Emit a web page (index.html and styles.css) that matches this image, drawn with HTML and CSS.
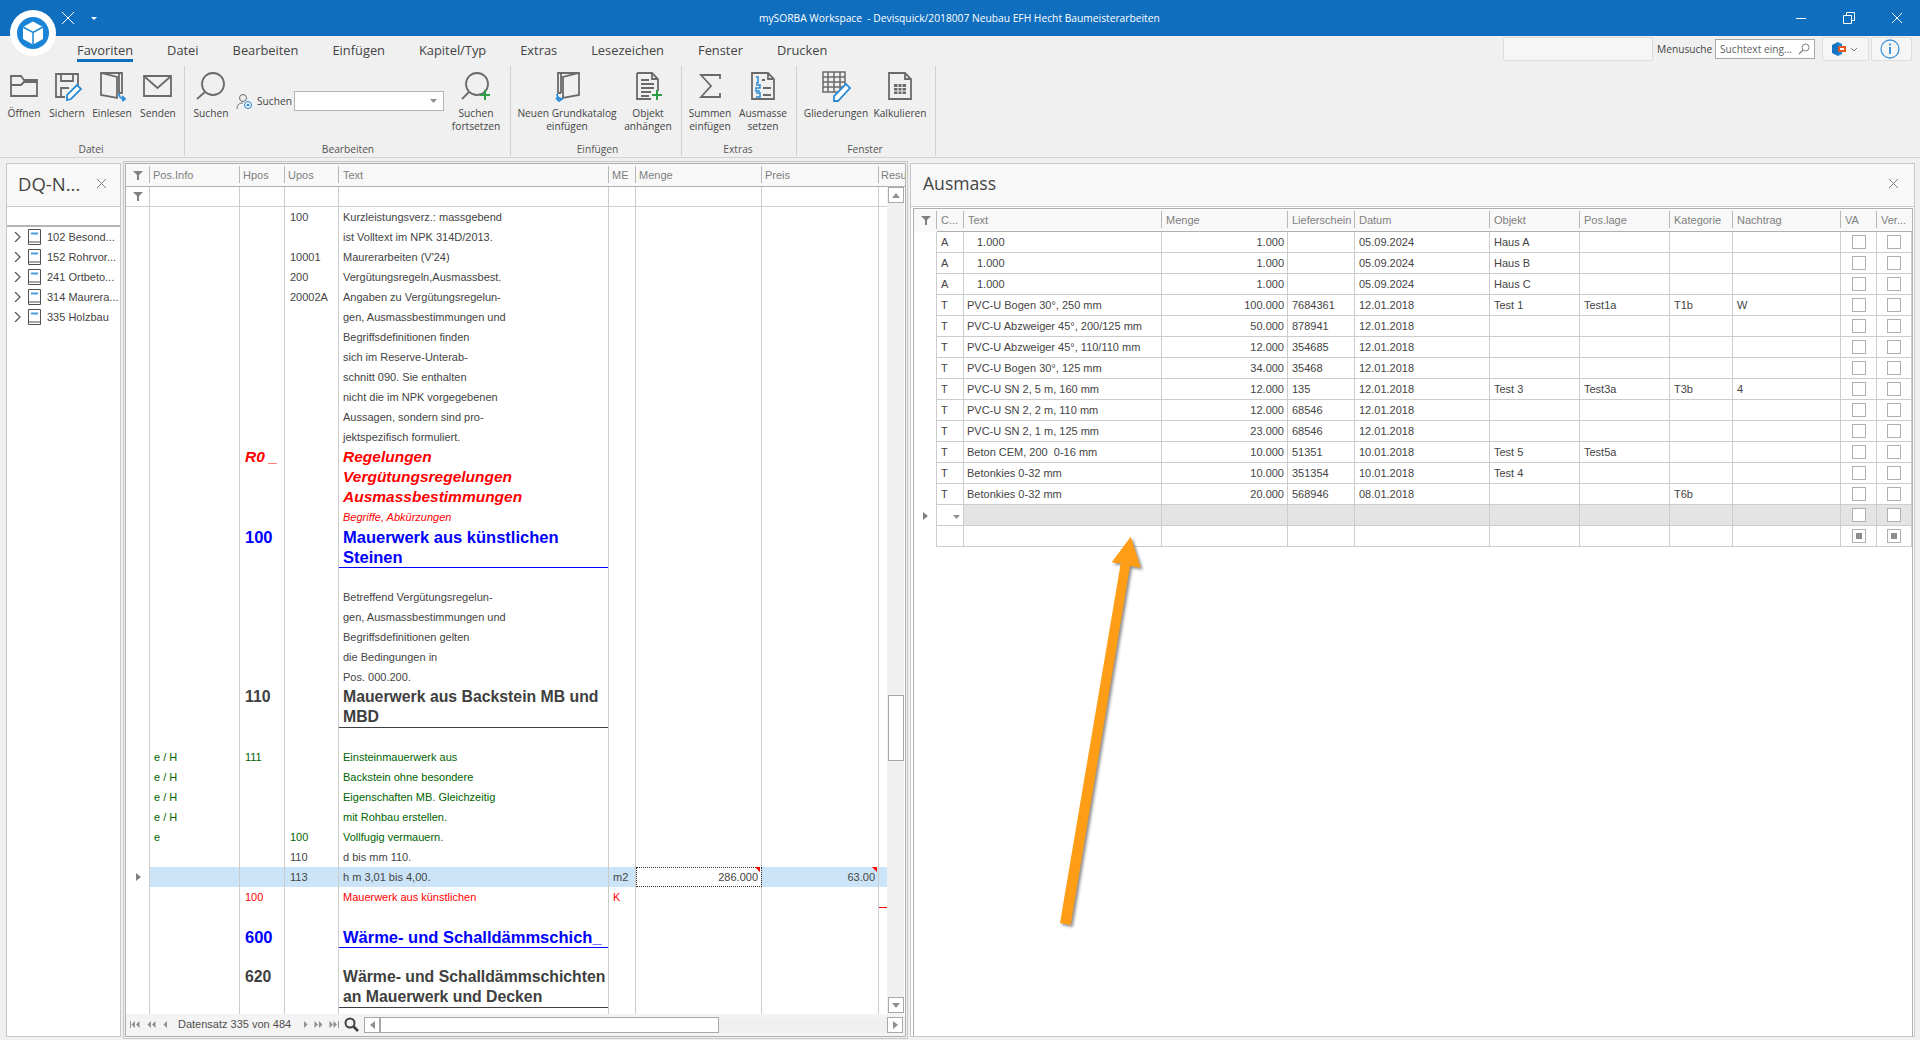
FILE: index.html
```html
<!DOCTYPE html>
<html>
<head>
    <title>mySORBA Workspace</title>
    <link rel="stylesheet" href="styles.css">
</head>
<body>
<div class="window">
    <div class="titlebar">
        <div class="qat">
            <svg class="qat-x" width="14" height="14" viewBox="0 0 14 14"><path d="M1 1l12 12M13 1L1 13" stroke="#fff" fill="none"/></svg>
            <svg class="qat-drop" width="8" height="6" viewBox="0 0 8 6"><path d="M1 2h6L4 5z" fill="#fff"/></svg>
        </div>
        <div class="title-text">mySORBA Workspace &nbsp;- Devisquick/2018007 Neubau EFH Hecht Baumeisterarbeiten</div>
        <div class="win-btns">
            <svg width="12" height="12" viewBox="0 0 12 12"><path d="M1 6.5h10" stroke="#fff" fill="none"/></svg>
            <svg width="12" height="12" viewBox="0 0 12 12"><path d="M.5 3.5h8v8h-8zM3.5 3V.5h8v8H9" stroke="#fff" fill="none"/></svg>
            <svg width="12" height="12" viewBox="0 0 12 12"><path d="M1 1l10 10M11 1L1 11" stroke="#fff" fill="none"/></svg>
        </div>
    </div>

    <svg class="app-logo" width="46" height="46" viewBox="0 0 46 46">
        <circle cx="23" cy="23" r="23" fill="#fff"/>
        <circle cx="23" cy="23" r="16" fill="#1a85d6"/>
        <path d="M23 11.500L33 17v12l-10 5.500L13 29V17z" fill="#fff"/>
        <path d="M13 17l10 5.500L33 17M23 22.500v12" stroke="#1a85d6" stroke-width="1.500" fill="none"/>
    </svg>

    <div class="tabrow">
        <div class="tabs">
            <span class="tab tab-active">Favoriten</span>
            <span class="tab">Datei</span>
            <span class="tab">Bearbeiten</span>
            <span class="tab">Einfügen</span>
            <span class="tab">Kapitel/Typ</span>
            <span class="tab">Extras</span>
            <span class="tab">Lesezeichen</span>
            <span class="tab">Fenster</span>
            <span class="tab">Drucken</span>
        </div>
        <div class="ribbon-tools">
            <div class="domain-box">DomaneServerClient</div>
            <span class="menu-label">Menusuche</span>
            <div class="menu-search">
                <span>Suchtext eing...</span>
                <svg width="12" height="12" viewBox="0 0 12 12"><circle cx="7.500" cy="4.500" r="3.500" stroke="#808080" fill="none"/><path d="M5 7l-4 4" stroke="#808080" stroke-width="1.300"/></svg>
            </div>
            <div class="tool-btn tool-office">
                <svg width="16" height="16" viewBox="0 0 16 16"><path d="M1 4l6-3v14l-6-3z" fill="#1272c4"/><path d="M7 1l4 2v2H7zM7 11h4v2l-4 2z" fill="#1a8ad8"/><path d="M7 5h8v6H7z" fill="#e8541e"/><path d="M9 7h4v2H9z" fill="#fff"/></svg>
                <svg width="8" height="5" viewBox="0 0 8 5"><path d="M1 1l3 3 3-3" stroke="#808080" fill="none"/></svg>
            </div>
            <div class="tool-btn tool-info">
                <svg width="20" height="20" viewBox="0 0 20 20"><circle cx="10" cy="10" r="9" stroke="#3f97de" stroke-width="1.300" fill="none"/><path d="M10 8v7" stroke="#3f97de" stroke-width="2"/><path d="M10 4.500v2" stroke="#3f97de" stroke-width="2"/></svg>
            </div>
        </div>
    </div>

    <div class="ribbon">
        <div class="rb-group rb-datei">
            <div class="rb-items">
                <div class="rb-btn w44">
                    <svg width="32" height="32" viewBox="0 0 32 32"><path d="M3 26V6h10l3 4h13v16zM3 15h10l3-3h13" stroke="#6a6a6a" stroke-width="1.800" fill="none"/></svg>
                    <span>Öffnen</span>
                </div>
                <div class="rb-btn w42">
                    <svg width="32" height="32" viewBox="0 0 32 32"><path d="M14 27H5V4h22v13M10 4v7h12V4M10 27v-9h8" stroke="#6a6a6a" stroke-width="1.800" fill="none"/><path d="M16 30v-5l10-10 4 4-10 10z" stroke="#2a8ad4" stroke-width="1.800" fill="#fff"/></svg>
                    <span>Sichern</span>
                </div>
                <div class="rb-btn w48">
                    <svg width="32" height="32" viewBox="0 0 32 32"><path d="M5 3h18v20M5 3v22l16 3V7zM23 23h3V3h-3" stroke="#6a6a6a" stroke-width="1.800" fill="none"/><path d="M23 23c0 4 1 6 6 6M26 26l3 3-3 2" stroke="#2a8ad4" stroke-width="1.800" fill="none"/></svg>
                    <span>Einlesen</span>
                </div>
                <div class="rb-btn w44">
                    <svg width="32" height="32" viewBox="0 0 32 32"><path d="M2 6h27v20H2zM3 7l12.500 11L28 7" stroke="#6a6a6a" stroke-width="1.800" fill="none"/></svg>
                    <span>Senden</span>
                </div>
            </div>
            <div class="rb-caption">Datei</div>
        </div>

        <div class="rb-group rb-bearbeiten">
            <div class="rb-items">
                <div class="rb-btn w50">
                    <svg width="32" height="32" viewBox="0 0 32 32"><circle cx="18" cy="14" r="11" stroke="#6a6a6a" stroke-width="1.800" fill="none"/><path d="M10 22L2 29" stroke="#6a6a6a" stroke-width="1.800"/></svg>
                    <span>Suchen</span>
                </div>
                <div class="rb-search">
                    <svg width="17" height="17" viewBox="0 0 17 17"><circle cx="7" cy="5" r="3.500" stroke="#6a6a6a" fill="none"/><path d="M1 16c0-4 2-6 6-6" stroke="#6a6a6a" fill="none"/><circle cx="12" cy="12" r="3.500" stroke="#2a8ad4" fill="none"/><circle cx="12" cy="12" r="1.300" fill="#2a8ad4"/></svg>
                    <span class="rb-search-label">Suchen</span>
                    <div class="rb-combo"><svg width="7" height="4" viewBox="0 0 7 4"><path d="M0 0h7L3.500 4z" fill="#909090"/></svg></div>
                </div>
                <div class="rb-btn w56">
                    <svg width="32" height="32" viewBox="0 0 32 32"><circle cx="17" cy="14" r="11" stroke="#6a6a6a" stroke-width="1.800" fill="none"/><path d="M9 22L2 29" stroke="#6a6a6a" stroke-width="1.800"/><path d="M25 20v10M20 25h10" stroke="#2f9e44" stroke-width="2"/></svg>
                    <span>Suchen<br>fortsetzen</span>
                </div>
            </div>
            <div class="rb-caption">Bearbeiten</div>
        </div>

        <div class="rb-group rb-einfuegen">
            <div class="rb-items">
                <div class="rb-btn w106">
                    <svg width="32" height="32" viewBox="0 0 32 32"><path d="M27 3H9v20M27 3v22l-16 3V7zM9 23H6V3h3" stroke="#6a6a6a" stroke-width="1.800" fill="none" transform="translate(1 0)"/><path d="M6 24c0 3 2 5 6 5M5 28l3 3 3-2" stroke="#2a8ad4" stroke-width="1.800" fill="none"/></svg>
                    <span>Neuen Grundkatalog<br>einfügen</span>
                </div>
                <div class="rb-btn w56">
                    <svg width="32" height="32" viewBox="0 0 32 32"><path d="M5 3h15l6 6v12M5 3v26h14M20 3v6h6M9 10h8M9 14h13M9 18h13M9 22h10M9 26h8" stroke="#6a6a6a" stroke-width="1.800" fill="none"/><path d="M25 20v10M20 25h10" stroke="#2f9e44" stroke-width="2"/></svg>
                    <span>Objekt<br>anhängen</span>
                </div>
            </div>
            <div class="rb-caption">Einfügen</div>
        </div>

        <div class="rb-group rb-extras">
            <div class="rb-items">
                <div class="rb-btn w54">
                    <svg width="32" height="32" viewBox="0 0 32 32"><path d="M26 9V5H7l10 11L7 27h19v-4" stroke="#6a6a6a" stroke-width="1.800" fill="none"/></svg>
                    <span>Summen<br>einfügen</span>
                </div>
                <div class="rb-btn w52">
                    <svg width="32" height="32" viewBox="0 0 32 32"><path d="M5 3h16l6 6v20H5zM21 3v6h6" stroke="#6a6a6a" stroke-width="1.800" fill="none"/><path d="M9 7h2v6H9M9 15h4v3H9v3h4M9 23h4v4H9" stroke="#2a8ad4" stroke-width="1.500" fill="none"/><path d="M15 10h3M16 18h8M16 25h8" stroke="#6a6a6a" stroke-width="1.800"/></svg>
                    <span>Ausmasse<br>setzen</span>
                </div>
            </div>
            <div class="rb-caption">Extras</div>
        </div>

        <div class="rb-group rb-fenster">
            <div class="rb-items">
                <div class="rb-btn w70">
                    <svg width="32" height="32" viewBox="0 0 32 32"><path d="M3 2h22v20H3zM3 7h22M3 12h22M3 17h22M8 2v20M14 2v20M20 2v20" stroke="#6a6a6a" stroke-width="1.500" fill="none"/><path d="M14 31v-5l12-12 4 4-12 13z" stroke="#2a8ad4" stroke-width="1.800" fill="#fff"/></svg>
                    <span>Gliederungen</span>
                </div>
                <div class="rb-btn w58">
                    <svg width="32" height="32" viewBox="0 0 32 32"><path d="M5 3h16l6 6v20H5zM21 3v6h6" stroke="#6a6a6a" stroke-width="1.800" fill="none"/><path d="M10 14h12v10H10z" fill="#6a6a6a"/><path d="M10 17.500h12M10 21h12M14 14v10M18 14v10" stroke="#f0f0f0"/></svg>
                    <span>Kalkulieren</span>
                </div>
            </div>
            <div class="rb-caption">Fenster</div>
        </div>
    </div>

    <div class="main">
        <div class="nav-panel">
            <div class="panel-head nav-head">
                <span class="nav-title">DQ-N...</span>
                <svg width="9" height="9" viewBox="0 0 9 9"><path d="M0 0l9 9M9 0L0 9" stroke="#808080" fill="none"/></svg>
            </div>
            <div class="nav-filter"></div>
            <div class="tree">
                <div class="tree-row"><svg class="chev" width="7" height="10" viewBox="0 0 7 10"><path d="M1 0l5 5-5 5" stroke="#505050" stroke-width="1.200" fill="none"/></svg><svg width="15" height="16" viewBox="0 0 15 16"><path d="M1.500.5h12v15h-12zM1.500 13h12" stroke="#505050" fill="none"/><path d="M4 3.500h7v2H4z" fill="#4a9fdc"/></svg><span>102 Besond...</span></div>
                <div class="tree-row"><svg class="chev" width="7" height="10" viewBox="0 0 7 10"><path d="M1 0l5 5-5 5" stroke="#505050" stroke-width="1.200" fill="none"/></svg><svg width="15" height="16" viewBox="0 0 15 16"><path d="M1.500.5h12v15h-12zM1.500 13h12" stroke="#505050" fill="none"/><path d="M4 3.500h7v2H4z" fill="#4a9fdc"/></svg><span>152 Rohrvor...</span></div>
                <div class="tree-row"><svg class="chev" width="7" height="10" viewBox="0 0 7 10"><path d="M1 0l5 5-5 5" stroke="#505050" stroke-width="1.200" fill="none"/></svg><svg width="15" height="16" viewBox="0 0 15 16"><path d="M1.500.5h12v15h-12zM1.500 13h12" stroke="#505050" fill="none"/><path d="M4 3.500h7v2H4z" fill="#4a9fdc"/></svg><span>241 Ortbeto...</span></div>
                <div class="tree-row"><svg class="chev" width="7" height="10" viewBox="0 0 7 10"><path d="M1 0l5 5-5 5" stroke="#505050" stroke-width="1.200" fill="none"/></svg><svg width="15" height="16" viewBox="0 0 15 16"><path d="M1.500.5h12v15h-12zM1.500 13h12" stroke="#505050" fill="none"/><path d="M4 3.500h7v2H4z" fill="#4a9fdc"/></svg><span>314 Maurera...</span></div>
                <div class="tree-row"><svg class="chev" width="7" height="10" viewBox="0 0 7 10"><path d="M1 0l5 5-5 5" stroke="#505050" stroke-width="1.200" fill="none"/></svg><svg width="15" height="16" viewBox="0 0 15 16"><path d="M1.500.5h12v15h-12zM1.500 13h12" stroke="#505050" fill="none"/><path d="M4 3.500h7v2H4z" fill="#4a9fdc"/></svg><span>335 Holzbau</span></div>
            </div>
        </div>

        <div class="pos-dock">
            <div class="pos-box">
                <div class="pos-head">
                    <div class="hd hd-ind"><svg width="12" height="10" viewBox="0 0 12 10"><path d="M1 1h10L7 5v5H5V5z" fill="#808080"/></svg></div>
                    <div class="hd w-posinfo">Pos.Info</div>
                    <div class="hd w-hpos">Hpos</div>
                    <div class="hd w-upos">Upos</div>
                    <div class="hd w-text">Text</div>
                    <div class="hd w-me">ME</div>
                    <div class="hd w-menge">Menge</div>
                    <div class="hd w-preis">Preis</div>
                    <div class="hd hd-last">Resu</div>
                </div>
                <div class="pos-body">
                    <div class="pos-scroll">
                        <table class="pos-table">
                            <colgroup><col class="c-ind"><col class="c-posinfo"><col class="c-hpos"><col class="c-upos"><col class="c-text"><col class="c-me"><col class="c-menge"><col class="c-preis"><col class="c-rest"></colgroup>
                            <tr class="filter-row"><td><svg width="12" height="10" viewBox="0 0 12 10"><path d="M1 1h10L7 5v5H5V5z" fill="#808080"/></svg></td><td></td><td></td><td></td><td></td><td></td><td></td><td></td><td></td></tr>
                            <tr><td></td><td></td><td></td><td>100</td><td>Kurzleistungsverz.: massgebend</td><td></td><td></td><td></td><td></td></tr>
                            <tr><td></td><td></td><td></td><td></td><td>ist Volltext im NPK 314D/2013.</td><td></td><td></td><td></td><td></td></tr>
                            <tr><td></td><td></td><td></td><td>10001</td><td>Maurerarbeiten (V'24)</td><td></td><td></td><td></td><td></td></tr>
                            <tr><td></td><td></td><td></td><td>200</td><td>Vergütungsregeln,Ausmassbest.</td><td></td><td></td><td></td><td></td></tr>
                            <tr><td></td><td></td><td></td><td>20002A</td><td>Angaben zu Vergütungsregelun-</td><td></td><td></td><td></td><td></td></tr>
                            <tr><td></td><td></td><td></td><td></td><td>gen, Ausmassbestimmungen und</td><td></td><td></td><td></td><td></td></tr>
                            <tr><td></td><td></td><td></td><td></td><td>Begriffsdefinitionen finden</td><td></td><td></td><td></td><td></td></tr>
                            <tr><td></td><td></td><td></td><td></td><td>sich im Reserve-Unterab-</td><td></td><td></td><td></td><td></td></tr>
                            <tr><td></td><td></td><td></td><td></td><td>schnitt 090. Sie enthalten</td><td></td><td></td><td></td><td></td></tr>
                            <tr><td></td><td></td><td></td><td></td><td>nicht die im NPK vorgegebenen</td><td></td><td></td><td></td><td></td></tr>
                            <tr><td></td><td></td><td></td><td></td><td>Aussagen, sondern sind pro-</td><td></td><td></td><td></td><td></td></tr>
                            <tr><td></td><td></td><td></td><td></td><td>jektspezifisch formuliert.</td><td></td><td></td><td></td><td></td></tr>
                            <tr class="t-red-h"><td></td><td></td><td>R0 _</td><td></td><td>Regelungen</td><td></td><td></td><td></td><td></td></tr>
                            <tr class="t-red-h"><td></td><td></td><td></td><td></td><td>Vergütungsregelungen</td><td></td><td></td><td></td><td></td></tr>
                            <tr class="t-red-h"><td></td><td></td><td></td><td></td><td>Ausmassbestimmungen</td><td></td><td></td><td></td><td></td></tr>
                            <tr class="t-red-s"><td></td><td></td><td></td><td></td><td>Begriffe, Abkürzungen</td><td></td><td></td><td></td><td></td></tr>
                            <tr class="t-blue"><td></td><td></td><td>100</td><td></td><td>Mauerwerk aus künstlichen</td><td></td><td></td><td></td><td></td></tr>
                            <tr class="t-blue"><td></td><td></td><td></td><td></td><td>Steinen</td><td></td><td></td><td></td><td></td></tr>
                            <tr><td></td><td></td><td></td><td></td><td class="rule-blue"></td><td></td><td></td><td></td><td></td></tr>
                            <tr><td></td><td></td><td></td><td></td><td>Betreffend Vergütungsregelun-</td><td></td><td></td><td></td><td></td></tr>
                            <tr><td></td><td></td><td></td><td></td><td>gen, Ausmassbestimmungen und</td><td></td><td></td><td></td><td></td></tr>
                            <tr><td></td><td></td><td></td><td></td><td>Begriffsdefinitionen gelten</td><td></td><td></td><td></td><td></td></tr>
                            <tr><td></td><td></td><td></td><td></td><td>die Bedingungen in</td><td></td><td></td><td></td><td></td></tr>
                            <tr><td></td><td></td><td></td><td></td><td>Pos. 000.200.</td><td></td><td></td><td></td><td></td></tr>
                            <tr class="t-dark"><td></td><td></td><td>110</td><td></td><td>Mauerwerk aus Backstein MB und</td><td></td><td></td><td></td><td></td></tr>
                            <tr class="t-dark"><td></td><td></td><td></td><td></td><td>MBD</td><td></td><td></td><td></td><td></td></tr>
                            <tr><td></td><td></td><td></td><td></td><td class="rule-dark"></td><td></td><td></td><td></td><td></td></tr>
                            <tr class="t-green"><td></td><td>e / H</td><td>111</td><td></td><td>Einsteinmauerwerk aus</td><td></td><td></td><td></td><td></td></tr>
                            <tr class="t-green"><td></td><td>e / H</td><td></td><td></td><td>Backstein ohne besondere</td><td></td><td></td><td></td><td></td></tr>
                            <tr class="t-green"><td></td><td>e / H</td><td></td><td></td><td>Eigenschaften MB. Gleichzeitig</td><td></td><td></td><td></td><td></td></tr>
                            <tr class="t-green"><td></td><td>e / H</td><td></td><td></td><td>mit Rohbau erstellen.</td><td></td><td></td><td></td><td></td></tr>
                            <tr class="t-green"><td></td><td>e</td><td></td><td>100</td><td>Vollfugig vermauern.</td><td></td><td></td><td></td><td></td></tr>
                            <tr><td></td><td></td><td></td><td>110</td><td>d bis mm 110.</td><td></td><td></td><td></td><td></td></tr>
                            <tr class="selected"><td class="row-mark"><svg width="5" height="8" viewBox="0 0 5 8"><path d="M0 0l5 4-5 4z" fill="#808080"/></svg></td><td></td><td></td><td>113</td><td>h m 3,01 bis 4,00.</td><td>m2</td><td class="num cell-focus"><span class="corner"></span>286.000</td><td class="num"><span class="corner"></span>63.00</td><td></td></tr>
                            <tr class="t-red"><td></td><td></td><td>100</td><td></td><td>Mauerwerk aus künstlichen</td><td>K</td><td></td><td></td><td></td></tr>
                            <tr><td></td><td></td><td></td><td></td><td></td><td></td><td></td><td></td><td class="dash-red"></td></tr>
                            <tr class="t-blue"><td></td><td></td><td>600</td><td></td><td>Wärme- und Schalldämmschich_</td><td></td><td></td><td></td><td></td></tr>
                            <tr><td></td><td></td><td></td><td></td><td class="rule-blue"></td><td></td><td></td><td></td><td></td></tr>
                            <tr class="t-dark"><td></td><td></td><td>620</td><td></td><td>Wärme- und Schalldämmschichten</td><td></td><td></td><td></td><td></td></tr>
                            <tr class="t-dark"><td></td><td></td><td></td><td></td><td>an Mauerwerk und Decken</td><td></td><td></td><td></td><td></td></tr>
                            <tr><td></td><td></td><td></td><td></td><td class="rule-dark"></td><td></td><td></td><td></td><td></td></tr>
                        </table>
                    </div>
                    <div class="vscroll">
                        <div class="sb-btn"><svg width="8" height="5" viewBox="0 0 8 5"><path d="M4 0l4 5H0z" fill="#909090"/></svg></div>
                        <div class="sb-thumb"></div>
                        <div class="sb-btn"><svg width="8" height="5" viewBox="0 0 8 5"><path d="M0 0h8L4 5z" fill="#909090"/></svg></div>
                    </div>
                </div>
                <div class="pos-foot">
                    <div class="nav-btns">
                        <svg width="10" height="7" viewBox="0 0 10 7"><path d="M0 0h1v7H0zM5 0v7L1.500 3.500zM9.500 0v7L6 3.500z" fill="#909090"/></svg>
                        <svg width="9" height="7" viewBox="0 0 9 7"><path d="M4 0v7L.5 3.500zM8.500 0v7L5 3.500z" fill="#909090"/></svg>
                        <svg width="5" height="7" viewBox="0 0 5 7"><path d="M4 0v7L.5 3.500z" fill="#909090"/></svg>
                    </div>
                    <span class="rec-text">Datensatz 335 von 484</span>
                    <div class="nav-btns nav-next">
                        <svg width="5" height="7" viewBox="0 0 5 7"><path d="M1 0v7l3.500-3.500z" fill="#909090"/></svg>
                        <svg width="9" height="7" viewBox="0 0 9 7"><path d="M.5 0v7L4 3.500zM5 0v7l3.500-3.500z" fill="#909090"/></svg>
                        <svg width="10" height="7" viewBox="0 0 10 7"><path d="M.5 0v7L4 3.500zM4.500 0v7L8 3.500zM9 0h1v7H9z" fill="#909090"/></svg>
                    </div>
                    <svg class="foot-search" width="15" height="15" viewBox="0 0 15 15"><circle cx="6" cy="6" r="4.500" stroke="#404040" stroke-width="2" fill="none"/><path d="M9.500 9.500l4.500 4.500" stroke="#404040" stroke-width="2.600"/></svg>
                    <div class="hscroll">
                        <div class="sb-btn"><svg width="5" height="8" viewBox="0 0 5 8"><path d="M5 0v8L0 4z" fill="#909090"/></svg></div>
                        <div class="hs-thumb"></div>
                        <div class="sb-btn"><svg width="5" height="8" viewBox="0 0 5 8"><path d="M0 0v8l5-4z" fill="#909090"/></svg></div>
                    </div>
                </div>
            </div>
        </div>

        <div class="aus-panel">
            <div class="panel-head aus-head">
                <span class="aus-title">Ausmass</span>
                <svg width="9" height="9" viewBox="0 0 9 9"><path d="M0 0l9 9M9 0L0 9" stroke="#808080" fill="none"/></svg>
            </div>
            <div class="aus-box">
                <table class="aus-table">
                    <colgroup><col class="a-ind"><col class="a-c"><col class="a-text"><col class="a-menge"><col class="a-lief"><col class="a-datum"><col class="a-obj"><col class="a-lage"><col class="a-kat"><col class="a-nach"><col class="a-va"><col class="a-ver"></colgroup>
                    <tr class="aus-hd"><th class="ind"><svg width="12" height="10" viewBox="0 0 12 10"><path d="M1 1h10L7 5v5H5V5z" fill="#808080"/></svg></th><th>C...</th><th>Text</th><th>Menge</th><th>Lieferschein</th><th>Datum</th><th>Objekt</th><th>Pos.lage</th><th>Kategorie</th><th>Nachtrag</th><th>VA</th><th>Ver...</th></tr>
                    <tr><td class="ind"></td><td>A</td><td class="indent">1.000</td><td class="num">1.000</td><td></td><td>05.09.2024</td><td>Haus A</td><td></td><td></td><td></td><td class="chk"><i></i></td><td class="chk"><i></i></td></tr>
                    <tr><td class="ind"></td><td>A</td><td class="indent">1.000</td><td class="num">1.000</td><td></td><td>05.09.2024</td><td>Haus B</td><td></td><td></td><td></td><td class="chk"><i></i></td><td class="chk"><i></i></td></tr>
                    <tr><td class="ind"></td><td>A</td><td class="indent">1.000</td><td class="num">1.000</td><td></td><td>05.09.2024</td><td>Haus C</td><td></td><td></td><td></td><td class="chk"><i></i></td><td class="chk"><i></i></td></tr>
                    <tr><td class="ind"></td><td>T</td><td>PVC-U Bogen 30°, 250 mm</td><td class="num">100.000</td><td>7684361</td><td>12.01.2018</td><td>Test 1</td><td>Test1a</td><td>T1b</td><td>W</td><td class="chk"><i></i></td><td class="chk"><i></i></td></tr>
                    <tr><td class="ind"></td><td>T</td><td>PVC-U Abzweiger 45°, 200/125 mm</td><td class="num">50.000</td><td>878941</td><td>12.01.2018</td><td></td><td></td><td></td><td></td><td class="chk"><i></i></td><td class="chk"><i></i></td></tr>
                    <tr><td class="ind"></td><td>T</td><td>PVC-U Abzweiger 45°, 110/110 mm</td><td class="num">12.000</td><td>354685</td><td>12.01.2018</td><td></td><td></td><td></td><td></td><td class="chk"><i></i></td><td class="chk"><i></i></td></tr>
                    <tr><td class="ind"></td><td>T</td><td>PVC-U Bogen 30°, 125 mm</td><td class="num">34.000</td><td>35468</td><td>12.01.2018</td><td></td><td></td><td></td><td></td><td class="chk"><i></i></td><td class="chk"><i></i></td></tr>
                    <tr><td class="ind"></td><td>T</td><td>PVC-U SN 2, 5 m, 160 mm</td><td class="num">12.000</td><td>135</td><td>12.01.2018</td><td>Test 3</td><td>Test3a</td><td>T3b</td><td>4</td><td class="chk"><i></i></td><td class="chk"><i></i></td></tr>
                    <tr><td class="ind"></td><td>T</td><td>PVC-U SN 2, 2 m, 110 mm</td><td class="num">12.000</td><td>68546</td><td>12.01.2018</td><td></td><td></td><td></td><td></td><td class="chk"><i></i></td><td class="chk"><i></i></td></tr>
                    <tr><td class="ind"></td><td>T</td><td>PVC-U SN 2, 1 m, 125 mm</td><td class="num">23.000</td><td>68546</td><td>12.01.2018</td><td></td><td></td><td></td><td></td><td class="chk"><i></i></td><td class="chk"><i></i></td></tr>
                    <tr><td class="ind"></td><td>T</td><td>Beton CEM, 200 &nbsp;0-16 mm</td><td class="num">10.000</td><td>51351</td><td>10.01.2018</td><td>Test 5</td><td>Test5a</td><td></td><td></td><td class="chk"><i></i></td><td class="chk"><i></i></td></tr>
                    <tr><td class="ind"></td><td>T</td><td>Betonkies 0-32 mm</td><td class="num">10.000</td><td>351354</td><td>10.01.2018</td><td>Test 4</td><td></td><td></td><td></td><td class="chk"><i></i></td><td class="chk"><i></i></td></tr>
                    <tr><td class="ind"></td><td>T</td><td>Betonkies 0-32 mm</td><td class="num">20.000</td><td>568946</td><td>08.01.2018</td><td></td><td></td><td>T6b</td><td></td><td class="chk"><i></i></td><td class="chk"><i></i></td></tr>
                    <tr class="new-row"><td class="ind"><svg width="5" height="8" viewBox="0 0 5 8"><path d="M0 0l5 4-5 4z" fill="#808080"/></svg></td><td class="c-drop"><svg width="7" height="4" viewBox="0 0 7 4"><path d="M0 0h7L3.500 4z" fill="#909090"/></svg></td><td></td><td></td><td></td><td></td><td></td><td></td><td></td><td></td><td class="chk"><i></i></td><td class="chk"><i></i></td></tr>
                    <tr><td class="ind"></td><td></td><td></td><td></td><td></td><td></td><td></td><td></td><td></td><td></td><td class="chk"><i class="mixed"></i></td><td class="chk"><i class="mixed"></i></td></tr>
                </table>
            </div>
        </div>
    </div>

    <svg class="callout" width="110" height="410" viewBox="1050 530 110 410">
        <path d="M1130.700 536.700L1140.700 567.700 1130 566 1070.700 925 1060 923 1120.700 563.500 1111.700 562.300z" fill="#ff9e16"/>
    </svg>
</div>
</body>
</html>
```

FILE: styles.css
```css
* {
    box-sizing: border-box;
}

html, body {
    margin: 0;
    height: 100%;
    overflow: hidden;
}

body {
    font-family: "Liberation Sans", Arial, sans-serif;
    font-size: 11px;
    color: #444;
    background-color: #f0f0f0;
}

.window {
    position: relative;
    width: 1920px;
    height: 1040px;
    display: flex;
    flex-direction: column;
}

/* title bar */
.titlebar {
    height: 36px;
    flex: none;
    background-color: #106ebe;
    color: #fff;
    display: flex;
    align-items: center;
    position: relative;
}

.qat {
    display: flex;
    align-items: center;
    padding-left: 61px;
    gap: 15px;
}

.title-text {
    position: absolute;
    left: 759px;
    top: 0;
    line-height: 36px;
    font-family: "Open Sans", sans-serif;
    font-size: 10.250px;
    white-space: nowrap;
}

.win-btns {
    margin-left: auto;
    padding-right: 17px;
    display: flex;
    gap: 36px;
}

.app-logo {
    position: absolute;
    left: 10px;
    top: 10px;
}

/* tab row */
.tabrow {
    height: 28px;
    flex: none;
    display: flex;
    align-items: stretch;
    font-family: "Open Sans", sans-serif;
}

.tabs {
    display: flex;
    gap: 34px;
    padding-left: 77px;
}

.tab {
    font-size: 12.850px;
    line-height: 28px;
    color: #444;
    height: 26px;
}

.tab-active {
    border-bottom: 3px solid #106ebe;
}

.ribbon-tools {
    margin-left: auto;
    padding: 1px 8px 0 0;
    display: flex;
    align-items: flex-start;
    font-size: 10.200px;
}

.domain-box {
    width: 150px;
    height: 24px;
    background-color: #f6f6f6;
    border: 1px solid #ddd;
    border-radius: 2px;
    color: #fbfbfb;
    line-height: 22px;
    padding-left: 29px;
    white-space: nowrap;
    overflow: hidden;
    flex: none;
}

.menu-label {
    margin-left: 4px;
    line-height: 24px;
    width: 58px;
    color: #444;
    flex: none;
}

.menu-search {
    width: 100px;
    height: 20px;
    margin-top: 2px;
    background-color: #fff;
    border: 1px solid #a8a8a8;
    padding: 0 4px;
    display: flex;
    align-items: center;
    justify-content: space-between;
    color: #606060;
    flex: none;
}

.tool-btn {
    height: 24px;
    background-color: #f6f6f6;
    border: 1px solid #ddd;
    border-radius: 2px;
    display: flex;
    align-items: center;
    justify-content: center;
    gap: 3px;
    flex: none;
}

.tool-office {
    width: 47px;
    margin-left: 7px;
    padding-right: 2px;
}

.tool-info {
    width: 41px;
    margin-left: 2px;
    padding-right: 4px;
}

/* ribbon */
.ribbon {
    height: 94px;
    flex: none;
    display: flex;
    font-family: "Open Sans", sans-serif;
    border-bottom: 1px solid #d4d4d4;
}

.rb-group {
    height: 90px;
    margin-top: 2px;
    border-right: 1px solid #d0d0d0;
    display: flex;
    flex-direction: column;
}

.rb-datei { width: 185px; padding-left: 2px; }
.rb-bearbeiten { width: 326px; padding-left: 1px; }
.rb-einfuegen { width: 171px; padding-left: 3px; }
.rb-extras { width: 115px; padding-left: 1px; }
.rb-fenster { width: 139px; padding-left: 4px; }

.rb-items {
    flex: 1;
    display: flex;
    padding-top: 4px;
}

.rb-caption {
    height: 16px;
    line-height: 18px;
    text-align: center;
    font-size: 10.200px;
    color: #555;
}

.rb-datei .rb-caption { padding-right: 4px; }
.rb-extras .rb-caption { padding-right: 3px; }
.rb-fenster .rb-caption { padding-right: 6px; }

.rb-btn {
    display: flex;
    flex-direction: column;
    align-items: center;
    font-size: 10.200px;
    line-height: 13px;
    text-align: center;
    color: #444;
    white-space: nowrap;
    flex: none;
}

.rb-btn span {
    margin-top: 5px;
}

.w42 { width: 42px; }
.w44 { width: 44px; }
.w48 { width: 48px; }
.w50 { width: 50px; }
.w52 { width: 52px; }
.w54 { width: 54px; }
.w56 { width: 56px; }
.w58 { width: 58px; }
.w70 { width: 70px; }
.w106 { width: 106px; }

.rb-search {
    width: 212px;
    height: 20px;
    margin-top: 21px;
    display: flex;
    align-items: center;
    gap: 4px;
    font-size: 10.200px;
    flex: none;
}

.rb-search-label {
    width: 33px;
    flex: none;
}

.rb-combo {
    width: 150px;
    height: 20px;
    flex: none;
    background-color: #fff;
    border: 1px solid #b4b4b4;
    display: flex;
    align-items: center;
    justify-content: flex-end;
    padding-right: 6px;
}

/* docks */
.main {
    flex: 1;
    min-height: 0;
    display: flex;
    align-items: flex-start;
    padding-left: 6px;
}

.panel-head {
    background-color: #f8f8f8;
    border-bottom: 1px solid #c8c8c8;
    display: flex;
    align-items: center;
    height: 43px;
    padding-bottom: 4px;
    flex: none;
}

.nav-panel {
    width: 115px;
    height: 874px;
    margin-top: 5px;
    border: 1px solid #c8c8c8;
    background-color: #fff;
    display: flex;
    flex-direction: column;
}

.nav-head {
    padding-left: 11px;
    padding-right: 14px;
    justify-content: space-between;
}

.nav-title {
    font-family: "Open Sans", sans-serif;
    font-size: 18.500px;
    color: #444;
}

.nav-filter {
    height: 20px;
    flex: none;
    border-bottom: 2px solid #b4b4b4;
    background-color: #fff;
}

.tree {
    padding: 0 0 0 7px;
    flex: 1;
}

.tree-row {
    height: 20px;
    display: flex;
    align-items: center;
    white-space: nowrap;
    overflow: hidden;
}

.chev {
    margin-right: 6px;
}

.tree-row span {
    margin-left: 5px;
}

/* positions grid */
.pos-dock {
    width: 785px;
    height: 878px;
    margin: 3px 0 0 2px;
    border: 1px solid #c8c8c8;
    padding: 1px;
}

.pos-box {
    height: 100%;
    border: 1px solid #b0b0b0;
    background-color: #fff;
    display: flex;
    flex-direction: column;
}

.pos-head {
    height: 23px;
    flex: none;
    display: flex;
    background-color: #f8f8f8;
    border-bottom: 1px solid #b0b0b0;
    color: #808080;
}

.hd {
    line-height: 22px;
    padding-left: 3px;
    position: relative;
    white-space: nowrap;
    overflow: hidden;
    flex: none;
}

.hd::after {
    content: "";
    position: absolute;
    right: 0;
    top: 2px;
    bottom: 3px;
    width: 1px;
    background-color: #b8b8b8;
}

.hd-ind {
    width: 24px;
    padding-left: 6px;
    display: flex;
    align-items: center;
}

.hd-last {
    flex: 1;
    padding-left: 2px;
}

.hd-last::after {
    display: none;
}

.w-posinfo { width: 90px; }
.w-hpos { width: 45px; }
.w-upos { width: 54px; }
.w-text { width: 270px; padding-left: 4px; }
.w-me { width: 27px; }
.w-menge { width: 126px; }
.w-preis { width: 117px; }

.pos-body {
    flex: 1;
    min-height: 0;
    display: flex;
}

.pos-scroll {
    width: 761px;
    overflow: hidden;
}

.pos-table {
    table-layout: fixed;
    width: 761px;
    border-collapse: separate;
    border-spacing: 0;
}

.c-ind { width: 24px; }
.c-posinfo { width: 90px; }
.c-hpos { width: 45px; }
.c-upos { width: 54px; }
.c-text { width: 270px; }
.c-me { width: 27px; }
.c-menge { width: 126px; }
.c-preis { width: 117px; }
.c-rest { width: 8px; }

.pos-table td {
    height: 20px;
    padding: 0 3px 0 4px;
    border-right: 1px solid #ccc;
    white-space: nowrap;
    overflow: hidden;
    position: relative;
}

.pos-table td:last-child {
    border-right: none;
    padding: 0;
}

.filter-row td {
    border-bottom: 1px solid #d0d0d0;
}

.filter-row td:first-child {
    padding-left: 6px;
}

.pos-table td:nth-child(3),
.pos-table td:nth-child(4) {
    padding-left: 5px;
}

.row-mark {
    text-align: center;
}

.t-red-h td { color: #ff0000; font-weight: bold; font-style: italic; font-size: 15.500px; }
.t-red-s td { color: #ff0000; font-style: italic; }
.t-blue td { color: #0000ff; font-weight: bold; font-size: 16.500px; }
.t-dark td { color: #404040; font-weight: bold; font-size: 15.800px; }
.t-green td { color: #006400; }
.t-red td { color: #ff0000; }

.rule-blue { box-shadow: inset 0 1px 0 #0000ff; }
.rule-dark { box-shadow: inset 0 1px 0 #404040; }
.dash-red { box-shadow: inset 0 1px 0 #ff0000; }

.pos-table .selected td {
    background-color: #cce4f7;
}

.pos-table .selected .row-mark {
    background-color: #fff;
}

.num {
    text-align: right;
}

.pos-table .selected .cell-focus {
    background-color: #fff;
    outline: 1px dotted #303030;
    outline-offset: -1px;
    border-right-color: #ccc;
}

.corner {
    position: absolute;
    top: 0;
    right: 1px;
    width: 0;
    height: 0;
    border-top: 5px solid #ff0000;
    border-left: 5px solid transparent;
}

.vscroll {
    width: 17px;
    flex: none;
    background-color: #f0f0f0;
    display: flex;
    flex-direction: column;
    padding: 0 1px;
    position: relative;
}

.sb-btn {
    width: 16px;
    height: 16px;
    flex: none;
    background-color: #fff;
    border: 1px solid #a8a8a8;
    display: flex;
    align-items: center;
    justify-content: center;
}

.vscroll .sb-thumb {
    flex: none;
    width: 16px;
    height: 66px;
    margin: 492px 0 236px;
    background-color: #fff;
    border: 1px solid #a8a8a8;
}

.pos-foot {
    height: 22px;
    flex: none;
    display: flex;
    align-items: flex-start;
    background-color: #f4f4f4;
    padding-top: 3px;
}

.nav-btns {
    display: flex;
    align-items: center;
    height: 15px;
    gap: 7px;
    padding-left: 4px;
    flex: none;
}

.rec-text {
    line-height: 15px;
    margin-left: 10px;
    width: 113px;
    color: #505050;
    white-space: nowrap;
    flex: none;
}

.nav-next {
    margin-left: 12px;
    gap: 6px;
    padding-left: 0;
}

.foot-search {
    margin-left: 5px;
    flex: none;
}

.hscroll {
    width: 539px;
    margin-left: 5px;
    display: flex;
    background-color: #f0f0f0;
    flex: none;
}

.hscroll .sb-btn {
    margin-left: 0;
}

.hs-thumb {
    width: 339px;
    height: 16px;
    background-color: #fff;
    border: 1px solid #a8a8a8;
    margin-right: auto;
}

/* Ausmass panel */
.aus-panel {
    width: 1005px;
    height: 874px;
    margin: 5px 0 0 2px;
    border: 1px solid #c8c8c8;
    background-color: #fff;
    display: flex;
    flex-direction: column;
}

.aus-head {
    padding-left: 12px;
    padding-right: 16px;
    justify-content: space-between;
}

.aus-title {
    font-family: "Open Sans", sans-serif;
    font-size: 17.600px;
    color: #444;
}

.aus-box {
    flex: 1;
    margin: 1px 1px 0 2px;
    border: 1px solid #b0b0b0;
    border-bottom: none;
    overflow: hidden;
}

.aus-table {
    table-layout: fixed;
    width: 998px;
    border-collapse: separate;
    border-spacing: 0;
}

.a-ind { width: 23px; }
.a-c { width: 27px; }
.a-text { width: 198px; }
.a-menge { width: 126px; }
.a-lief { width: 67px; }
.a-datum { width: 135px; }
.a-obj { width: 90px; }
.a-lage { width: 90px; }
.a-kat { width: 63px; }
.a-nach { width: 108px; }
.a-va { width: 36px; }
.a-ver { width: 35px; }

.aus-table td {
    height: 21px;
    padding: 0 3px 0 4px;
    border-right: 1px solid #ccc;
    border-bottom: 1px solid #ccc;
    white-space: nowrap;
    overflow: hidden;
}

.aus-table td:nth-child(3) {
    padding-left: 3px;
}

.aus-table .ind {
    border-bottom: none;
    text-align: center;
    padding: 0;
}

.aus-hd th {
    height: 23px;
    padding: 0 0 1px 4px;
    font-weight: normal;
    text-align: left;
    color: #808080;
    background-color: #f8f8f8;
    border-bottom: 1px solid #b0b0b0;
    white-space: nowrap;
    overflow: hidden;
    position: relative;
}

.aus-hd th::after {
    content: "";
    position: absolute;
    right: 0;
    top: 2px;
    bottom: 3px;
    width: 1px;
    background-color: #b8b8b8;
}

.aus-hd th:last-child::after {
    display: none;
}

.aus-table td.indent {
    padding-left: 13px;
}

.aus-table .chk {
    padding: 0;
    text-align: center;
}

.chk i {
    display: block;
    width: 14px;
    height: 14px;
    margin: 0 auto;
    background-color: #fff;
    border: 1px solid #b0b0b0;
    padding: 3px;
}

.chk i.mixed::before {
    content: "";
    display: block;
    width: 6px;
    height: 6px;
    background-color: #8c8c8c;
}

.new-row td {
    background-color: #e4e4e4;
}

.new-row td.ind,
.new-row td.c-drop {
    background-color: #fff;
}

.c-drop {
    text-align: right;
}

.callout {
    position: absolute;
    left: 1050px;
    top: 530px;
    filter: drop-shadow(2px 2px 1.500px rgba(0, 0, 0, 0.45));
}
```
